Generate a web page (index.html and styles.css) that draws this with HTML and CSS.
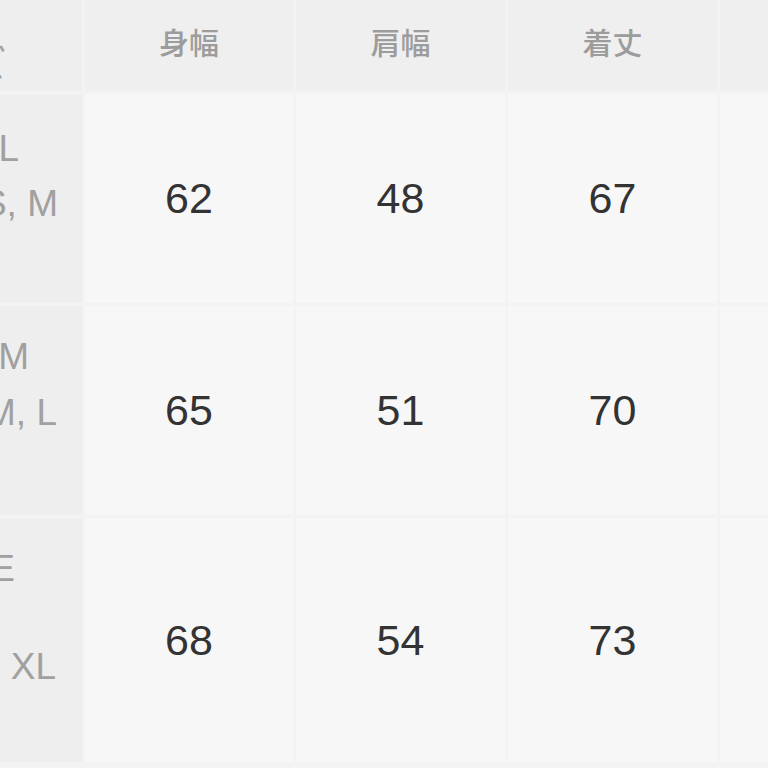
FILE: index.html
```html
<!DOCTYPE html>
<html lang="ja">
<head>
<meta charset="utf-8">
<title>サイズ表</title>
<link rel="stylesheet" href="styles.css">
</head>
<body>
<div class="table">
  <div class="cell head side"><span class="side-head">サイズ</span></div>
  <div class="cell head">身幅</div>
  <div class="cell head">肩幅</div>
  <div class="cell head">着丈</div>
  <div class="cell head"></div>

  <div class="cell side r1">
    <span class="line l1a">L</span>
    <span class="line l1b">S, M</span>
  </div>
  <div class="cell num">62</div>
  <div class="cell num">48</div>
  <div class="cell num">67</div>
  <div class="cell num"></div>

  <div class="cell side r2">
    <span class="line l2a">M</span>
    <span class="line l2b">M, L</span>
  </div>
  <div class="cell num">65</div>
  <div class="cell num">51</div>
  <div class="cell num">70</div>
  <div class="cell num"></div>

  <div class="cell side r3">
    <span class="line l3a">E</span>
    <span class="line l3b">XL</span>
  </div>
  <div class="cell num">68</div>
  <div class="cell num">54</div>
  <div class="cell num">73</div>
  <div class="cell num"></div>
</div>
</body>
</html>
```

FILE: styles.css
```css
html, body {
  margin: 0;
  padding: 0;
  background: #f3f3f3;
  width: 768px;
  height: 768px;
  overflow: hidden;
}

.table {
  display: grid;
  grid-template-columns: 82px 208px 209px 209px 1fr;
  grid-template-rows: 98px 209px 209px 244px;
  gap: 3px;
  margin-top: -7px;
  font-family: "Liberation Sans", Arial, "Noto Sans CJK JP", sans-serif;
}

.cell {
  background: #f7f7f7;
  display: flex;
  align-items: center;
  justify-content: center;
  overflow: hidden;
}

.head {
  background: #efefef;
  color: #9c9c9c;
  font-family: "Noto Sans CJK JP", sans-serif;
  font-size: 30px;
  font-weight: 500;
  padding-bottom: 2px;
  box-sizing: border-box;
}

.head.side {
  justify-content: flex-end;
}

.side-head {
  margin-right: 76px;
  white-space: nowrap;
}

.num {
  color: #333333;
  font-size: 43px;
}

.side {
  background: #eeeeee;
  color: #a0a0a0;
  font-size: 37px;
  flex-direction: column;
  align-items: flex-end;
  justify-content: flex-start;
  box-sizing: border-box;
}

.line {
  display: block;
  white-space: nowrap;
}

.r1 { padding-top: 27px; line-height: 55px; }
.r2 { padding-top: 23px; line-height: 56px; }
.r3 { padding-top: 27px; line-height: 48px; }
.l3b { margin-top: 50px; }

.l1a { margin-right: 63px; }
.l1b { margin-right: 24px; }
.l2a { margin-right: 53px; }
.l2b { margin-right: 25px; }
.l3a { margin-right: 67px; }
.l3b { margin-right: 26px; }
```
